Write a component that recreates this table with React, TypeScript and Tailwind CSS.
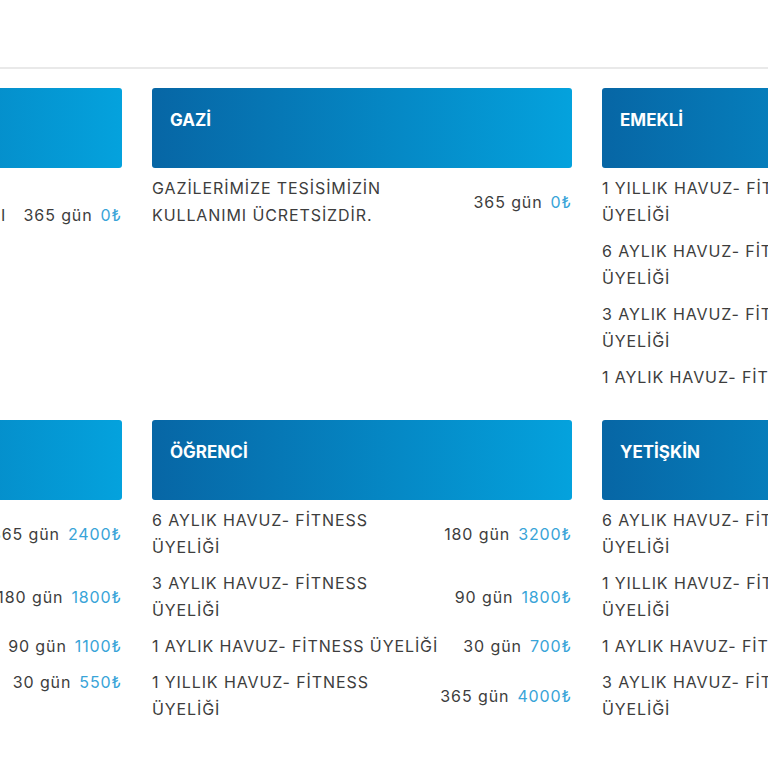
import type { ReactNode } from "react";

type Item = { name: ReactNode; days: string; price: string; tight?: boolean };
type Card = { title: string; items: Item[] };

const top: Card[] = [
  {
    title: "ŞEHİT YAKINI",
    items: [
      {
        name: (
          <span className="whitespace-nowrap">
            ŞEHİT YAKINLARIMIZA VE
            <br />
            <span className="tracking-[1.2px]">TESİSİMİZİN ÜCRETSİZ KULLANIMI</span>
            <br />
            SAĞLANMAKTADIR.
          </span>
        ),
        days: "365 gün",
        price: "0₺",
        tight: true,
      },
    ],
  },
  {
    title: "GAZİ",
    items: [
      { name: "GAZİLERİMİZE TESİSİMİZİN KULLANIMI ÜCRETSİZDİR.", days: "365 gün", price: "0₺" },
    ],
  },
  {
    title: "EMEKLİ",
    items: [
      { name: "1 YILLIK HAVUZ- FİTNESS ÜYELİĞİ", days: "365 gün", price: "3000₺" },
      { name: "6 AYLIK HAVUZ- FİTNESS ÜYELİĞİ", days: "180 gün", price: "2200₺" },
      { name: "3 AYLIK HAVUZ- FİTNESS ÜYELİĞİ", days: "90 gün", price: "1300₺" },
      { name: "1 AYLIK HAVUZ- FİTNESS ÜYELİĞİ", days: "30 gün", price: "500₺" },
    ],
  },
];

const bottom: Card[] = [
  {
    title: "ÇOCUK",
    items: [
      { name: "1 YILLIK HAVUZ- FİTNESS ÜYELİĞİ", days: "365 gün", price: "2400₺" },
      { name: "6 AYLIK HAVUZ- FİTNESS ÜYELİĞİ", days: "180 gün", price: "1800₺" },
      { name: "3 AYLIK FİTNESS ÜYELİĞİ", days: "90 gün", price: "1100₺" },
      { name: "1 AYLIK HAVUZ- FİTNESS ÜYELİĞİ", days: "30 gün", price: "550₺" },
    ],
  },
  {
    title: "ÖĞRENCİ",
    items: [
      { name: "6 AYLIK HAVUZ- FİTNESS ÜYELİĞİ", days: "180 gün", price: "3200₺" },
      { name: "3 AYLIK HAVUZ- FİTNESS ÜYELİĞİ", days: "90 gün", price: "1800₺" },
      { name: "1 AYLIK HAVUZ- FİTNESS ÜYELİĞİ", days: "30 gün", price: "700₺" },
      { name: "1 YILLIK HAVUZ- FİTNESS ÜYELİĞİ", days: "365 gün", price: "4000₺" },
    ],
  },
  {
    title: "YETİŞKİN",
    items: [
      { name: "6 AYLIK HAVUZ- FİTNESS ÜYELİĞİ", days: "180 gün", price: "4000₺" },
      { name: "1 YILLIK HAVUZ- FİTNESS ÜYELİĞİ", days: "365 gün", price: "6000₺" },
      { name: "1 AYLIK HAVUZ- FİTNESS ÜYELİĞİ", days: "30 gün", price: "900₺" },
      { name: "3 AYLIK HAVUZ- FİTNESS ÜYELİĞİ", days: "90 gün", price: "2200₺" },
    ],
  },
];

function PriceCard({ card }: { card: Card }) {
  return (
    <div className="w-[420px] shrink-0">
      <div className="h-[80px] rounded-[3px] bg-gradient-to-r from-[#0766a5] to-[#04a2dd] px-[18px] pt-[20px]">
        <h3 className="text-[17px] font-bold leading-[24px] text-white">{card.title}</h3>
      </div>
      <ul className="mt-[7px] flex flex-col gap-[9px]">
        {card.items.map((it, i) => (
          <li
            key={i}
            className={
              "flex items-center justify-between text-[16px] leading-[27px] tracking-[0.9px] " +
              (it.tight ? "gap-[12px]" : "gap-[20px]")
            }
          >
            <span className="text-[#3d3d3d]">{it.name}</span>
            <span className="flex shrink-0 gap-[8px] whitespace-nowrap">
              <span className="text-[#3d3d3d]">{it.days}</span>
              <span className="text-[#38a4d8]">{it.price}</span>
            </span>
          </li>
        ))}
      </ul>
    </div>
  );
}

export default function App() {
  return (
    <div className="h-[768px] w-[768px] overflow-hidden bg-white font-['Inter',sans-serif]">
      <div className="h-[67px]" />
      <div className="h-[2px] bg-[#e9e9e9]" />
      <div className="ml-[-298px] flex flex-col gap-[29px] pt-[19px]">
        <div className="flex items-start gap-[30px]">
          {top.map((c) => (
            <PriceCard key={c.title} card={c} />
          ))}
        </div>
        <div className="flex items-start gap-[30px]">
          {bottom.map((c) => (
            <PriceCard key={c.title} card={c} />
          ))}
        </div>
      </div>
    </div>
  );
}
